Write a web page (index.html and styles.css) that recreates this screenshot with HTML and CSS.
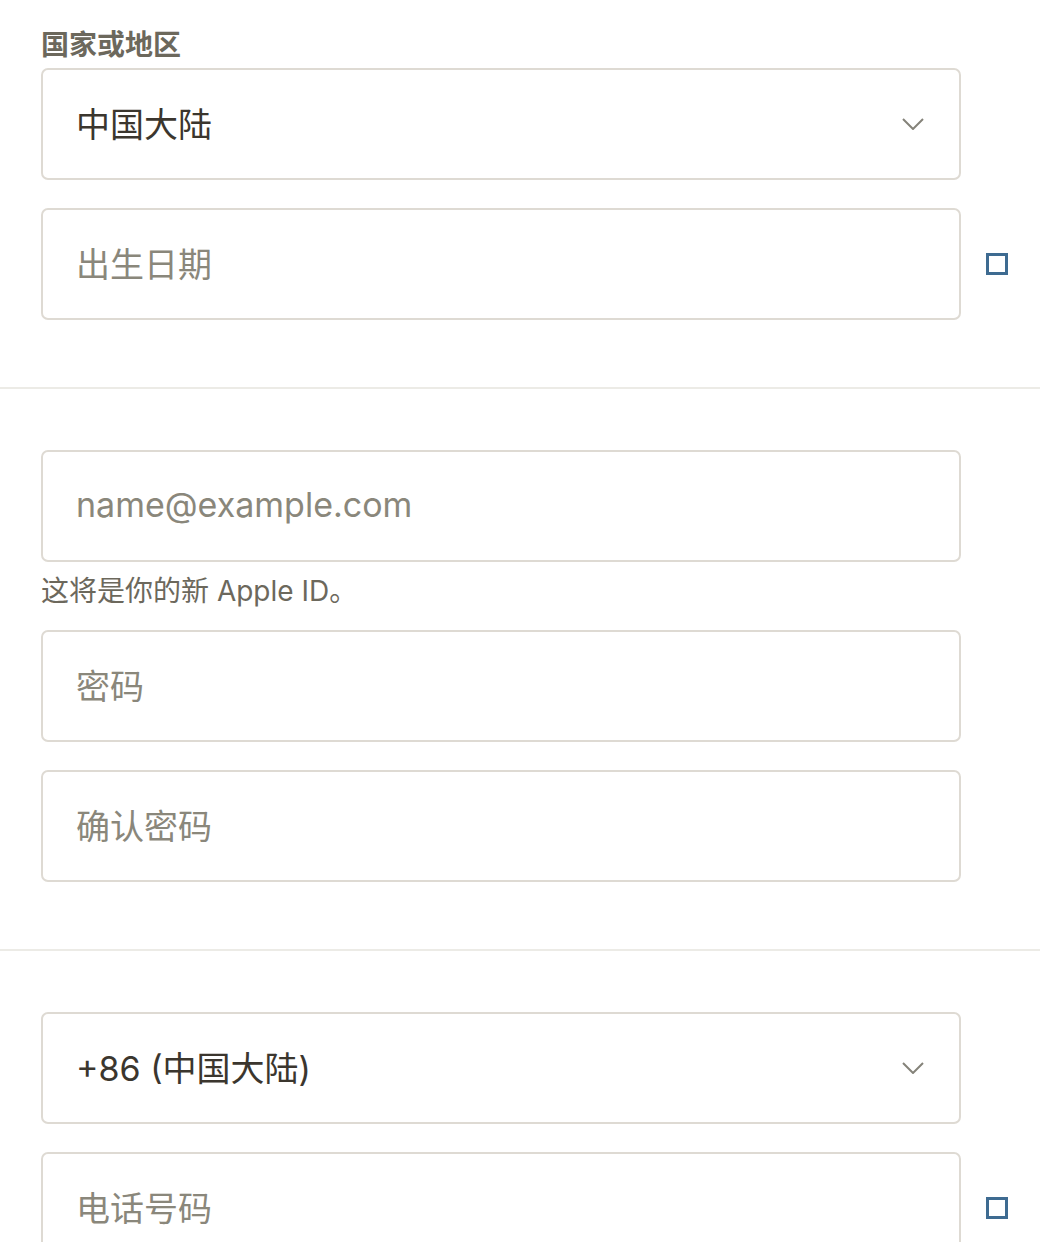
FILE: index.html
```html
<!DOCTYPE html>
<html lang="zh-CN">
<head>
  <meta charset="UTF-8" />
  <title>创建你的 Apple ID</title>
  <link rel="stylesheet" href="styles.css">
</head>
<body>
  <section class="bloque bloque-primero">
    <div class="etiqueta">国家或地区</div>
    <div class="fila">
      <div class="campo campo-select">
        <span class="valor">中国大陆</span>
        <svg class="flecha" width="22" height="12" viewBox="0 0 22 12"><path d="M1 1l10 10L21 1" fill="none" stroke="#85837a" stroke-width="2"/></svg>
      </div>
    </div>
    <div class="fila">
      <div class="campo"><span class="marcador">出生日期</span></div>
      <span class="casilla"></span>
    </div>
  </section>
  <div class="separador"></div>
  <section class="bloque">
    <div class="fila">
      <div class="campo"><span class="marcador">name@example.com</span></div>
    </div>
    <div class="ayuda">这将是你的新 Apple ID。</div>
    <div class="fila">
      <div class="campo"><span class="marcador">密码</span></div>
    </div>
    <div class="fila">
      <div class="campo"><span class="marcador">确认密码</span></div>
    </div>
  </section>
  <div class="separador"></div>
  <section class="bloque">
    <div class="fila">
      <div class="campo campo-select">
        <span class="valor">+86 (中国大陆)</span>
        <svg class="flecha" width="22" height="12" viewBox="0 0 22 12"><path d="M1 1l10 10L21 1" fill="none" stroke="#85837a" stroke-width="2"/></svg>
      </div>
    </div>
    <div class="fila">
      <div class="campo"><span class="marcador">电话号码</span></div>
      <span class="casilla"></span>
    </div>
  </section>
</body>
</html>
```
FILE: styles.css
```css
* { box-sizing: border-box; }
body {
  margin: 0; padding: 0; background: #fff; height: 1242px; overflow: hidden;
  font-family: Inter, "Noto Sans CJK SC", sans-serif; color: #3b362e;
}
.bloque {
  padding: 61px 0 67px 41px;
  display: flex; flex-direction: column; gap: 28px;
}
.bloque-primero { padding-top: 26px; gap: 0; }
.bloque-primero .fila + .fila { margin-top: 28px; }
.etiqueta {
  font-size: 28px; font-weight: bold; color: #6c685c;
  line-height: 38px; margin-bottom: 4px;
}
.fila { display: flex; align-items: center; }
.campo {
  width: 920px; height: 112px; flex-shrink: 0;
  border: 2px solid #dedad3; border-radius: 7px;
  display: flex; align-items: center; justify-content: space-between;
  padding: 0 35px 4px 33px;
}
.valor { font-size: 34px; color: #3b362e; }
.marcador { font-size: 34px; color: #8a877b; }
.campo-select .flecha { margin-top: 4px; }
.casilla {
  width: 22px; height: 22px; margin-left: 25px;
  border: 3px solid #3e6b91;
}
.ayuda {
  font-size: 28px; color: #6c685c; line-height: 40px;
  margin: -19px 0 -9px;
}
.separador { height: 2px; background: #ecebe6; }
```
